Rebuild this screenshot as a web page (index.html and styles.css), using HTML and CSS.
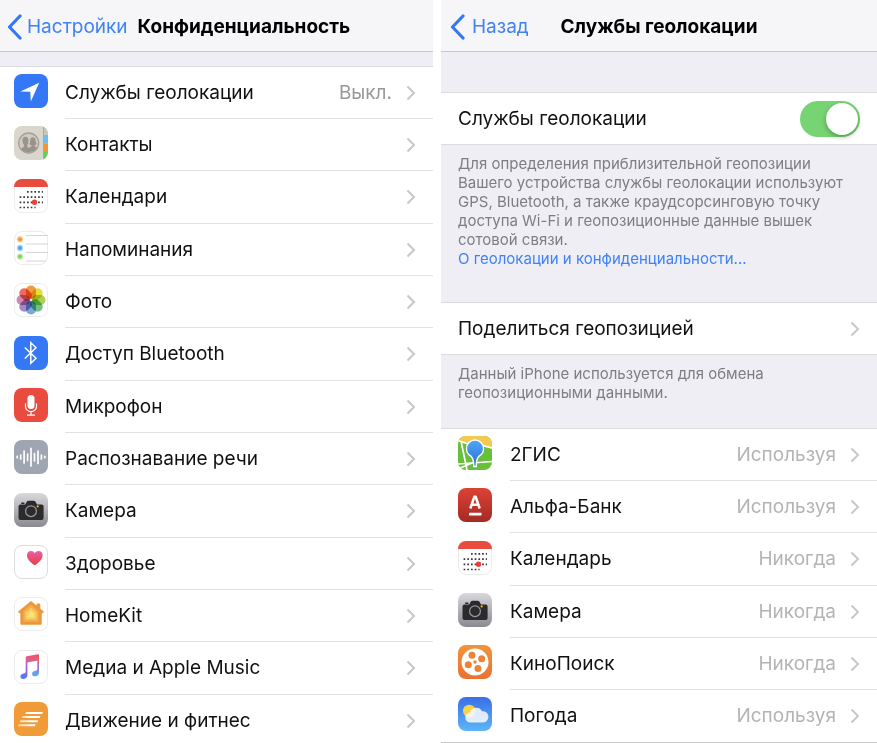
FILE: index.html
```
<!DOCTYPE html>
<html lang="ru">
<head>
<meta charset="utf-8" />
<meta name="viewport" content="width=device-width, initial-scale=1" />
<title>Конфиденциальность</title>
<link rel="stylesheet" href="styles.css">
</head>
<body>

<!-- shared icons -->
<svg class="sprite" xmlns="http://www.w3.org/2000/svg" aria-hidden="true">
	<defs>
		<linearGradient id="silver" x1="0" y1="0" x2="0" y2="1">
			<stop offset="0" stop-color="#d9d8dc"/>
			<stop offset="1" stop-color="#8b8a90"/>
		</linearGradient>
		<clipPath id="tile"><rect width="34" height="34" rx="8"/></clipPath>
	</defs>
	<symbol id="chevron" viewBox="0 0 10 16">
		<path d="M1.500 1.500L8 8l-6.500 6.500" fill="none" stroke="#c7c7cc" stroke-width="2"/>
	</symbol>
	<symbol id="back" viewBox="0 0 15 26">
		<path d="M13 2L2.500 13 13 24" fill="none" stroke="#3478f6" stroke-width="3.200" stroke-linecap="round" stroke-linejoin="round"/>
	</symbol>
	<symbol id="calendar" viewBox="0 0 34 34">
		<rect x=".5" y=".5" width="33" height="33" rx="7.500" fill="#fff" stroke="#ececec"/>
		<path d="M0 8a8 8 0 0 1 8-8h18a8 8 0 0 1 8 8z" fill="#e94b3e"/>
		<g stroke="#3a3a3a" stroke-width="1.700" stroke-dasharray="1.700 2">
			<path d="M13 12.900h16M5.600 18.100h23.400M5.600 23.300h23.400M5.600 28.500h16"/>
		</g>
		<circle cx="20.500" cy="23.300" r="2.700" fill="#ea4236"/>
	</symbol>
	<symbol id="camera" viewBox="0 0 34 34">
		<rect width="34" height="34" rx="8" fill="url(#silver)"/>
		<path d="M4.500 13.500q0-2 2-2h4.700l1.500-2.700q.6-1 1.800-1h5.200q1.200 0 1.800 1l1.500 2.700h4.600q2 0 2 2v11.500q0 2-2 2H6.500q-2 0-2-2z" fill="#2b2b2d"/>
		<rect x="7" y="9.400" width="3.600" height="1.500" rx=".7" fill="#2b2b2d"/>
		<circle cx="17" cy="18.200" r="5.400" fill="#2b2b2d" stroke="#9a9a9c" stroke-width="1.200"/>
		<circle cx="23.700" cy="13.400" r="1.100" fill="#f0b92c"/>
	</symbol>
</svg>

<main class="screens">

	<section class="screen">
		<header class="navbar">
			<a class="back" href="#"><svg><use href="#back"/></svg>Настройки</a>
			<h1>Конфиденциальность</h1>
		</header>

		<nav class="list list-privacy">
			<a class="row" href="#">
				<svg class="icon" viewBox="0 0 34 34">
					<rect width="34" height="34" rx="8" fill="#3478f6"/>
					<path d="M25.200 8.800L6.500 17.500l9.800.3.500 9.700z" fill="#fff"/>
				</svg>
				<span class="cell"><span class="label">Службы геолокации</span><span class="value muted">Выкл.</span><svg class="chevron"><use href="#chevron"/></svg></span>
			</a>
			<a class="row" href="#">
				<svg class="icon" viewBox="0 0 34 34">
					<g clip-path="url(#tile)">
						<rect width="34" height="34" fill="#d9d6cb"/>
						<rect x="29" width="1" height="34" fill="#aaa79e"/>
						<rect x="30" width="4" height="9" fill="#c9c6bc"/>
						<rect x="30" y="9" width="4" height="8.500" fill="#6fbdf2"/>
						<rect x="30" y="17.500" width="4" height="8.500" fill="#f29537"/>
						<rect x="30" y="26" width="4" height="8" fill="#63cf59"/>
						<circle cx="14.700" cy="17" r="10" fill="#cfcbc1" stroke="#a5a098" stroke-width="1.300"/>
						<path d="M6.500 22.500q3.600-1 3.700-3.200-1.700-1.500-1.700-4.500 0-4 3-4t3 4q0 3-1.300 4.500l.8 2.700 3.300-1.500.2-1.500q-2-.2-2.400-1 1.200-1 1.200-3.700 0-3 2.500-3t2.700 3q0 2.500 1.300 3.700-.7.900-2.200 1l.1 1.500 2.300 1q-2.500 4.500-8.300 4.700-5.500-.2-8.200-3.700z" fill="#99938b"/>
					</g>
				</svg>
				<span class="cell"><span class="label">Контакты</span><svg class="chevron"><use href="#chevron"/></svg></span>
			</a>
			<a class="row" href="#">
				<svg class="icon"><use href="#calendar"/></svg>
				<span class="cell"><span class="label">Календари</span><svg class="chevron"><use href="#chevron"/></svg></span>
			</a>
			<a class="row" href="#">
				<svg class="icon" viewBox="0 0 34 34">
					<rect x=".5" y=".5" width="33" height="33" rx="7.500" fill="#fff" stroke="#ececec"/>
					<path d="M12 4.500h22M12 13h22M12 21.500h22M12 30h20" stroke="#d4d4d6"/>
					<circle cx="6" cy="8.300" r="3.200" fill="#f9cfa2"/>
					<circle cx="6" cy="8.300" r="1.900" fill="#f0963a"/>
					<circle cx="6" cy="17" r="3.200" fill="#a9d7fa"/>
					<circle cx="6" cy="17" r="1.900" fill="#44a4f0"/>
					<circle cx="6" cy="25.600" r="3.200" fill="#c3edae"/>
					<circle cx="6" cy="25.600" r="1.900" fill="#7dd657"/>
				</svg>
				<span class="cell"><span class="label">Напоминания</span><svg class="chevron"><use href="#chevron"/></svg></span>
			</a>
			<a class="row" href="#">
				<svg class="icon photos" viewBox="0 0 34 34">
					<rect x=".5" y=".5" width="33" height="33" rx="7.500" fill="#fff" stroke="#ececec"/>
					<rect x="12" y="2.500" width="10" height="13.500" rx="5" fill="#f09c3e"/>
					<rect x="12" y="2.500" width="10" height="13.500" rx="5" fill="#e6dc3c" transform="rotate(45 17 17)"/>
					<rect x="12" y="2.500" width="10" height="13.500" rx="5" fill="#acd158" transform="rotate(90 17 17)"/>
					<rect x="12" y="2.500" width="10" height="13.500" rx="5" fill="#6fbf8a" transform="rotate(135 17 17)"/>
					<rect x="12" y="2.500" width="10" height="13.500" rx="5" fill="#78a9d8" transform="rotate(180 17 17)"/>
					<rect x="12" y="2.500" width="10" height="13.500" rx="5" fill="#a088c4" transform="rotate(225 17 17)"/>
					<rect x="12" y="2.500" width="10" height="13.500" rx="5" fill="#d089b2" transform="rotate(270 17 17)"/>
					<rect x="12" y="2.500" width="10" height="13.500" rx="5" fill="#ea6c5c" transform="rotate(315 17 17)"/>
				</svg>
				<span class="cell"><span class="label">Фото</span><svg class="chevron"><use href="#chevron"/></svg></span>
			</a>
			<a class="row" href="#">
				<svg class="icon" viewBox="0 0 34 34">
					<rect width="34" height="34" rx="8" fill="#3478f6"/>
					<path d="M10.800 11.500L22 22.300l-5.200 5V6.700l5.200 5-11.200 10.800" fill="none" stroke="#fff" stroke-width="1.500"/>
				</svg>
				<span class="cell"><span class="label">Доступ Bluetooth</span><svg class="chevron"><use href="#chevron"/></svg></span>
			</a>
			<a class="row" href="#">
				<svg class="icon" viewBox="0 0 34 34">
					<rect width="34" height="34" rx="8" fill="#e94b3e"/>
					<rect x="13.500" y="7" width="7" height="14" rx="3.500" fill="#fff"/>
					<path d="M11.500 15.500v3a5.500 5.200 0 0 0 11 0v-3M17 23.700V27M13 27.200h8" fill="none" stroke="#fff" stroke-width="1.200"/>
				</svg>
				<span class="cell"><span class="label">Микрофон</span><svg class="chevron"><use href="#chevron"/></svg></span>
			</a>
			<a class="row" href="#">
				<svg class="icon" viewBox="0 0 34 34">
					<rect width="34" height="34" rx="8" fill="#9fa5b1"/>
					<path d="M3.200 16.300v1.400M6.700 15v4M10.100 11v12M13.600 14v6.500M17 8.300v17.700M20.500 13.500v7.500M24 11v12.500M27.400 15v4M30.800 16.300v1.400" stroke="#fff" stroke-width="1.700" stroke-linecap="round"/>
				</svg>
				<span class="cell"><span class="label">Распознавание речи</span><svg class="chevron"><use href="#chevron"/></svg></span>
			</a>
			<a class="row" href="#">
				<svg class="icon"><use href="#camera"/></svg>
				<span class="cell"><span class="label">Камера</span><svg class="chevron"><use href="#chevron"/></svg></span>
			</a>
			<a class="row" href="#">
				<svg class="icon" viewBox="0 0 34 34">
					<defs>
						<linearGradient id="heart" x1="0" y1="0" x2="0" y2="1">
							<stop offset="0" stop-color="#ea5fb0"/>
							<stop offset="1" stop-color="#eb3d35"/>
						</linearGradient>
					</defs>
					<rect x=".5" y=".5" width="33" height="33" rx="7.500" fill="#fff" stroke="#dcdcde"/>
					<path d="M20.800 20.300C15 16.300 13 13.500 13 10.200 13 7.600 14.700 6 17 6c1.700 0 3 .8 3.800 2.200C21.600 6.800 22.900 6 24.600 6c2.300 0 4 1.600 4 4.200 0 3.300-2 6.100-7.800 10.100z" fill="url(#heart)"/>
				</svg>
				<span class="cell"><span class="label">Здоровье</span><svg class="chevron"><use href="#chevron"/></svg></span>
			</a>
			<a class="row" href="#">
				<svg class="icon" viewBox="0 0 34 34">
					<rect x=".5" y=".5" width="33" height="33" rx="7.500" fill="#fff" stroke="#ececec"/>
					<path d="M17 4.500l6 4.900V7h2.800v4.700l3.700 3.100-.9 1.100h-1.400v11.300H6.900V15.900H5.400l-.9-1.100z" fill="#ec983a" stroke="#ec983a" stroke-linejoin="round"/>
					<path d="M17 7.800l7.700 6.400v10.600H9.300V14.200z" fill="#f3b04c"/>
					<path d="M17 10.700l5.500 4.700v7.200h-11v-7.200z" fill="#f8cd61"/>
					<path d="M17 14l3.200 2.700v3.900h-6.400v-3.900z" fill="#fbe27a"/>
				</svg>
				<span class="cell"><span class="label">HomeKit</span><svg class="chevron"><use href="#chevron"/></svg></span>
			</a>
			<a class="row" href="#">
				<svg class="icon" viewBox="0 0 34 34">
					<defs>
						<linearGradient id="note" x1=".6" y1="0" x2=".4" y2="1">
							<stop offset="0" stop-color="#f0555f"/>
							<stop offset=".3" stop-color="#d6609c"/>
							<stop offset=".65" stop-color="#8a62e8"/>
							<stop offset="1" stop-color="#4f7df5"/>
						</linearGradient>
						<linearGradient id="note-right" gradientUnits="userSpaceOnUse" x1="24" y1="8" x2="22" y2="26">
							<stop offset="0" stop-color="#ef5a66"/>
							<stop offset=".5" stop-color="#a673cf"/>
							<stop offset="1" stop-color="#4bb1fa"/>
						</linearGradient>
					</defs>
					<rect x=".5" y=".5" width="33" height="33" rx="7.500" fill="#fff" stroke="#ececec"/>
					<path d="M11.700 7.500q0-1 1-1.200l11.300-2.100q1-.2 1 .8v5.200l-11.600 2.200v12.700c0 2.300-1.500 3.700-3.700 3.900-2 .2-3.300-.9-3.300-2.400 0-1.600 1.200-2.700 3.200-3.100 1.500-.3 2.100-.5 2.100-1.900z" fill="url(#note)"/>
					<path d="M25 6v16.400c0 2.300-1.500 3.700-3.600 3.900-2 .2-3.300-.9-3.300-2.400 0-1.600 1.200-2.700 3.200-3.100 1.400-.3 2-.5 2-1.900V8z" fill="url(#note-right)"/>
				</svg>
				<span class="cell"><span class="label">Медиа и Apple Music</span><svg class="chevron"><use href="#chevron"/></svg></span>
			</a>
			<a class="row" href="#">
				<svg class="icon" viewBox="0 0 34 34">
					<defs>
						<linearGradient id="speed">
							<stop offset="0" stop-color="#fff" stop-opacity=".5"/>
							<stop offset=".5" stop-color="#fff"/>
						</linearGradient>
					</defs>
					<rect width="34" height="34" rx="8" fill="#f09a38"/>
					<path d="M12 10h17l-.8 2H11.200zM8.700 14h17.700l-.8 2H7.900zM6.400 18.200h17.800l-.8 2H5.600zM4.700 22.300h17l-.8 2h-17z" fill="url(#speed)"/>
				</svg>
				<span class="cell"><span class="label">Движение и фитнес</span><svg class="chevron"><use href="#chevron"/></svg></span>
			</a>
		</nav>
	</section>

	<section class="screen">
		<header class="navbar navbar-wide">
			<a class="back" href="#"><svg><use href="#back"/></svg>Назад</a>
			<h1>Службы геолокации</h1>
		</header>

		<div class="list list-switch">
			<label class="row-plain" for="locationServices">
				<span class="label">Службы геолокации</span>
				<input class="switch" id="locationServices" type="checkbox" role="switch" checked />
			</label>
		</div>
		<div class="note note-about">
			<p>Для определения приблизительной геопозиции Вашего устройства службы геолокации используют GPS, Bluetooth, а также краудсорсинговую точку доступа Wi-Fi и геопозиционные данные вышек сотовой связи.</p>
			<a href="#">О геолокации и конфиденциальности...</a>
		</div>

		<div class="list">
			<a class="row-plain" href="#">
				<span class="label">Поделиться геопозицией</span>
				<svg class="chevron"><use href="#chevron"/></svg>
			</a>
		</div>
		<div class="note note-share">
			<p>Данный iPhone используется для обмена геопозиционными данными.</p>
		</div>

		<nav class="list list-apps">
			<a class="row" href="#">
				<svg class="icon" viewBox="0 0 34 34">
					<defs>
						<linearGradient id="pin" x1="0" y1="0" x2="0" y2="1">
							<stop offset="0" stop-color="#4fa8f5"/>
							<stop offset="1" stop-color="#2c6be0"/>
						</linearGradient>
					</defs>
					<g clip-path="url(#tile)">
						<rect width="34" height="34" fill="#67bf3c"/>
						<path d="M0 0h34v13l-10-3.500L0 5z" fill="#f3c94f"/>
						<path d="M0 4.500l12 4M24 9.500l10 2.500M3 5l6 29M0 28l34-2.500M0 33l14-6" fill="none" stroke="#fff" stroke-width="1.700"/>
						<path d="M15.800 30.500c0-6-.8-8.500-2.800-10.300A8.500 8.500 0 0 1 8.500 12.500a8.500 8.500 0 0 1 17 0 8.500 8.500 0 0 1-4.500 7.700c-2 1.800-2.800 4.300-2.800 10.300z" fill="url(#pin)" stroke="#fff" stroke-width="1.400"/>
					</g>
				</svg>
				<span class="cell"><span class="label">2ГИС</span><span class="value">Используя</span><svg class="chevron"><use href="#chevron"/></svg></span>
			</a>
			<a class="row" href="#">
				<svg class="icon" viewBox="0 0 34 34">
					<defs>
						<linearGradient id="alfa" x1="0" y1="0" x2="0" y2="1">
							<stop offset="0" stop-color="#dc4236"/>
							<stop offset="1" stop-color="#a52a25"/>
						</linearGradient>
					</defs>
					<rect width="34" height="34" rx="8" fill="url(#alfa)"/>
					<path d="M12.300 20.500L16.300 8.800h1.400l4 11.700M13.700 16.700h6.600" fill="none" stroke="#fff" stroke-width="2.500" stroke-linejoin="round"/>
					<rect x="11" y="24.700" width="12.500" height="2.700" rx=".5" fill="#fff"/>
				</svg>
				<span class="cell"><span class="label">Альфа-Банк</span><span class="value">Используя</span><svg class="chevron"><use href="#chevron"/></svg></span>
			</a>
			<a class="row" href="#">
				<svg class="icon"><use href="#calendar"/></svg>
				<span class="cell"><span class="label">Календарь</span><span class="value">Никогда</span><svg class="chevron"><use href="#chevron"/></svg></span>
			</a>
			<a class="row" href="#">
				<svg class="icon"><use href="#camera"/></svg>
				<span class="cell"><span class="label">Камера</span><span class="value">Никогда</span><svg class="chevron"><use href="#chevron"/></svg></span>
			</a>
			<a class="row" href="#">
				<svg class="icon" viewBox="0 0 34 34">
					<defs>
						<linearGradient id="reel" x1="0" y1="0" x2="0" y2="1">
							<stop offset="0" stop-color="#f0943a"/>
							<stop offset="1" stop-color="#ec7030"/>
						</linearGradient>
					</defs>
					<rect width="34" height="34" rx="8" fill="url(#reel)"/>
					<circle cx="17" cy="17" r="13.500" fill="#fff"/>
					<g fill="#ee8235">
						<circle cx="14" cy="10.200" r="3.500"/>
						<circle cx="23.700" cy="13.800" r="3.500"/>
						<circle cx="20" cy="23.500" r="3.500"/>
						<circle cx="10.300" cy="19.800" r="3.500"/>
						<circle cx="17" cy="17" r="1.700"/>
					</g>
				</svg>
				<span class="cell"><span class="label">КиноПоиск</span><span class="value">Никогда</span><svg class="chevron"><use href="#chevron"/></svg></span>
			</a>
			<a class="row" href="#">
				<svg class="icon" viewBox="0 0 34 34">
					<defs>
						<linearGradient id="sky" x1="0" y1="0" x2="0" y2="1">
							<stop offset="0" stop-color="#3a6fe6"/>
							<stop offset="1" stop-color="#5cb6f7"/>
						</linearGradient>
					</defs>
					<rect width="34" height="34" rx="8" fill="url(#sky)"/>
					<circle cx="11.300" cy="14" r="6.300" fill="#f8d348"/>
					<path d="M12.500 25.500a5 5 0 0 1-.5-10 6.500 6.500 0 0 1 12-1.300A5.700 5.700 0 1 1 24 25.500z" fill="#f4f8fe" fill-opacity=".88"/>
				</svg>
				<span class="cell"><span class="label">Погода</span><span class="value">Используя</span><svg class="chevron"><use href="#chevron"/></svg></span>
			</a>
		</nav>
	</section>

</main>

</body>
</html>
```
FILE: styles.css
```
html, body {
	margin: 0;
	padding: 0;
	height: 100%;
}

body {
	font-family: Inter, "Liberation Sans", sans-serif;
	font-size: 19px;
	line-height: 24px;
	color: #111;
	background: #fff;
	overflow: hidden;
}

a {
	color: inherit;
	text-decoration: none;
}

p {
	margin: 0;
}

.sprite {
	position: absolute;
	width: 0;
	height: 0;
}

.screens {
	display: grid;
	grid-template-columns: 433fr 436fr;
	align-items: start;
	gap: 8px;
}

.screen {
	min-width: 0;
	background: #efeef4;
}

/* top bar */

.navbar {
	display: grid;
	grid-template-columns: 1fr auto 1fr;
	gap: 10px;
	align-items: center;
	height: 49px;
	padding: 2px 7px 0;
	background: #f6f6f8;
	border-bottom: 1px solid #c9c9cc;
}

.navbar h1 {
	margin: 0;
	font-size: 19px;
	font-weight: 700;
	color: #000;
	white-space: nowrap;
}

.back {
	display: flex;
	align-items: center;
	gap: 5px;
	color: #3e82f7;
}

.back svg {
	width: 15px;
	height: 26px;
}

.navbar-wide {
	padding: 2px 9px 0;
}

.navbar-wide .back {
	gap: 7px;
}

/* lists */

.list {
	background: #fff;
	border-top: 1px solid #dcdce0;
	border-bottom: 1px solid #dcdce0;
}

.list-privacy {
	margin-top: 14px;
}

.list-switch {
	margin-top: 40px;
}

.list-apps {
	border-bottom-color: #c9c9cc;
}

.row {
	display: flex;
	align-items: center;
	gap: 17px;
	height: 52px;
	padding-left: 14px;
}

.row:nth-child(3n) {
	height: 53px;
}

.list-apps .row {
	gap: 18px;
	padding-left: 17px;
}

.list-apps .row:last-child {
	height: 52px;
}

.icon {
	flex: none;
	width: 34px;
	height: 34px;
	margin-bottom: 4px;
}

.photos rect + rect {
	mix-blend-mode: multiply;
}

.cell {
	flex: 1;
	display: flex;
	align-items: center;
	align-self: stretch;
	padding-right: 17px;
	border-bottom: 1px solid #e2e2e4;
}

.row:last-child .cell {
	border-bottom-color: transparent;
}

.row-plain {
	display: flex;
	align-items: center;
	height: 51px;
	padding: 0 17px;
}

.label {
	flex: 1;
}

.value {
	color: #b4b4b6;
}

.value.muted {
	color: #98989c;
}

.chevron {
	flex: none;
	width: 10px;
	height: 16px;
	margin-left: 14px;
}

/* switch */

.switch {
	appearance: none;
	display: flex;
	box-sizing: border-box;
	width: 60px;
	height: 36px;
	margin: 0;
	padding: 2px;
	border-radius: 18px;
	background: #e5e5ea;
	cursor: pointer;
}

.switch::before {
	content: "";
	width: 32px;
	height: 32px;
	border-radius: 50%;
	background: #fff;
	box-shadow: 0 2px 5px rgba(0, 0, 0, .3);
}

.switch:checked {
	justify-content: flex-end;
	background: #76d572;
}

/* grey notes between the lists */

.note {
	padding: 9px 17px 0;
	font-size: 15px;
	line-height: 19px;
	color: #7d7d82;
}

.note a {
	color: #3e82f7;
}

.note-about {
	padding-bottom: 34px;
}

.note-share {
	padding-bottom: 26px;
}
```
